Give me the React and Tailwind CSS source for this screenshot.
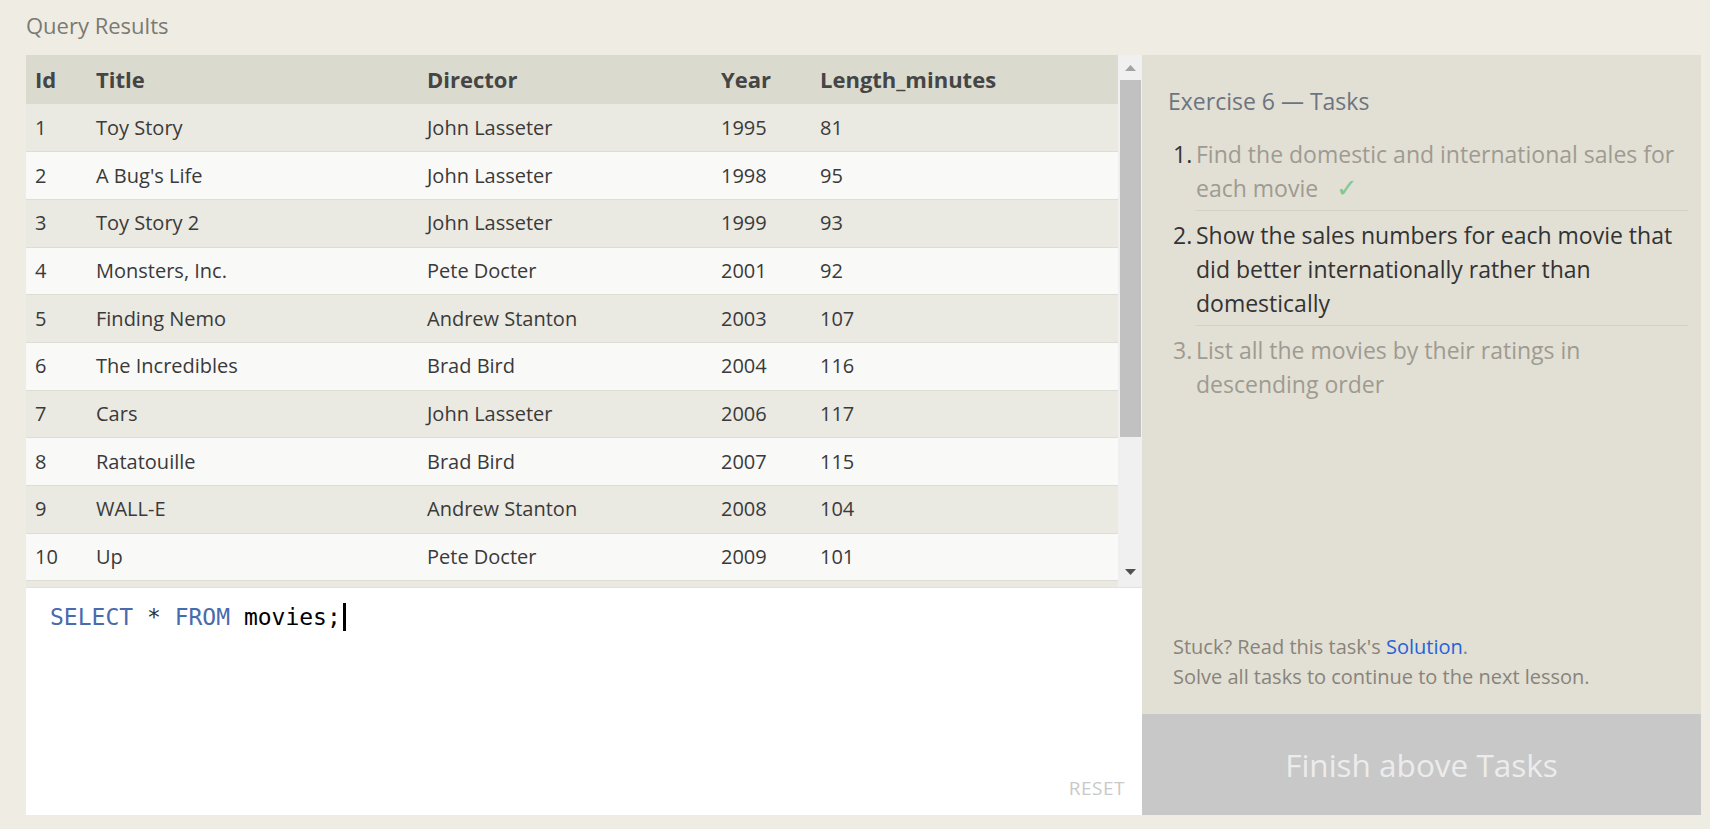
import React from 'react'

const movies = [
  [1, 'Toy Story', 'John Lasseter', 1995, 81],
  [2, "A Bug's Life", 'John Lasseter', 1998, 95],
  [3, 'Toy Story 2', 'John Lasseter', 1999, 93],
  [4, 'Monsters, Inc.', 'Pete Docter', 2001, 92],
  [5, 'Finding Nemo', 'Andrew Stanton', 2003, 107],
  [6, 'The Incredibles', 'Brad Bird', 2004, 116],
  [7, 'Cars', 'John Lasseter', 2006, 117],
  [8, 'Ratatouille', 'Brad Bird', 2007, 115],
  [9, 'WALL-E', 'Andrew Stanton', 2008, 104],
  [10, 'Up', 'Pete Docter', 2009, 101]
]

const tasks = [
  { text: 'Find the domestic and international sales for each movie', done: true },
  { text: 'Show the sales numbers for each movie that did better internationally rather than domestically', active: true },
  { text: 'List all the movies by their ratings in descending order' }
]

const ResultsTable = () => {
  return (
    <div className="flex h-[532px] overflow-hidden">
      {/* the row under "Up" is scrolled out of view, only its background shows */}
      <div className="w-[1092px] overflow-hidden bg-[#eae9e2]">
        <table className="w-full table-fixed border-collapse text-left">
          <colgroup>
            <col className="w-[61px]" />
            <col className="w-[331px]" />
            <col className="w-[294px]" />
            <col className="w-[99px]" />
            <col />
          </colgroup>
          <thead>
            <tr className="h-[49px] bg-[#dadace] text-[22px] font-bold text-[#454545]">
              <th className="pl-[9px] font-bold">Id</th>
              <th className="pl-[9px] font-bold">Title</th>
              <th className="pl-[9px] font-bold">Director</th>
              <th className="pl-[9px] font-bold">Year</th>
              <th className="pl-[9px] font-bold">Length_minutes</th>
            </tr>
          </thead>
          <tbody>
            {movies.map((m, i) => (
              <tr
                key={m[0]}
                className={`h-[47.7px] border-b border-[#dddcd5] text-[20px] text-[#3a3a3a] ${
                  i % 2 === 0 ? 'bg-[#eae9e2]' : 'bg-[#f9f9f8]'
                }`}
              >
                {m.map((cell, j) => (
                  <td key={j} className="pl-[9px]">
                    {cell}
                  </td>
                ))}
              </tr>
            ))}
          </tbody>
        </table>
      </div>

      {/* fake scrollbar */}
      <div className="flex w-[24px] flex-col items-center bg-[#f0f0f0]">
        <div className="flex h-[25px] items-center justify-center">
          <svg width="11" height="6" viewBox="0 0 11 6">
            <path d="M5.5 0 L11 6 L0 6 Z" fill="#a3a3a3" />
          </svg>
        </div>
        <div className="h-[357px] w-[21px] bg-[#c1c1c1]" />
        <div className="flex-1" />
        <div className="flex h-[25px] items-center justify-center pb-[6px]">
          <svg width="11" height="6" viewBox="0 0 11 6">
            <path d="M0 0 L11 0 L5.5 6 Z" fill="#505050" />
          </svg>
        </div>
      </div>
    </div>
  )
}

const Editor = () => {
  return (
    <div className="flex flex-1 flex-col border-t border-[#e2e1da] bg-white">
      <div className="flex-1 pl-[24px] pt-[15px]">
        <div className="flex h-[28px] items-center">
          <p className="whitespace-pre font-['DejaVu_Sans_Mono',monospace] text-[23px] leading-[28px] text-black">
            <span className="text-[#4a6aae]">SELECT</span>
            <span className="text-[#333]"> * </span>
            <span className="text-[#4a6aae]">FROM</span> movies;
          </p>
          <span className="ml-[2px] inline-block h-[28px] w-[3px] bg-black" />
        </div>
      </div>
      <div className="flex justify-end pb-[13px] pr-[17px]">
        <span className="text-[19px] tracking-[0.5px] text-[#c9c9c9]">RESET</span>
      </div>
    </div>
  )
}

const TasksPanel = () => {
  return (
    <div className="flex flex-1 flex-col bg-[#e2dfd4]">
      <div className="flex-1 pl-[26px] pr-[13px] pt-[31px]">
        <h3 className="text-[23px] leading-[30px] text-[#6c7480]">Exercise 6 — Tasks</h3>
        <ol className="mt-[14px]">
          {tasks.map((t, i) => (
            <li
              key={i}
              className={`flex text-[23px] leading-[34px] ${
                t.active ? 'text-[#333]' : 'text-[#9e9b92]'
              }`}
            >
              <span className={`w-[28px] shrink-0 pl-[5px] pt-[7px] ${i === 0 ? 'text-[#333]' : ''}`}>
                {i + 1}.
              </span>
              <div
                className={`flex-1 pb-[5px] pr-[12px] pt-[7px] ${
                  i < tasks.length - 1 ? 'border-b border-[#d3d0c5]' : ''
                }`}
              >
                {t.text}
                {t.done && (
                  <span className="ml-[18px] inline-block text-[26px] leading-[20px] text-[#7fc98c]">✓</span>
                )}
              </div>
            </li>
          ))}
        </ol>
      </div>

      <div className="pb-[22px] pl-[31px] text-[20px] leading-[30px] text-[#88847b]">
        <p>
          Stuck? Read this task's <span className="text-[#2563d8]">Solution</span>.
        </p>
        <p>Solve all tasks to continue to the next lesson.</p>
      </div>

      <div className="flex h-[101px] items-center justify-center bg-[#c8c8c8]">
        <span className="text-[31.5px] text-[#ececec]">Finish above Tasks</span>
      </div>
    </div>
  )
}

export default function App() {
  return (
    <div className="min-h-screen bg-[#efece4] pl-[26px] pr-[9px] pt-[10px] font-['Open_Sans',sans-serif]">
      <h2 className="text-[22px] leading-[30px] text-[#7a7a72]">Query Results</h2>

      <div className="mt-[15px] flex h-[760px]">
        {/* Left part: results + editor */}
        <div className="flex w-[1116px] flex-col">
          <ResultsTable />
          <Editor />
        </div>

        {/* Right part: tasks */}
        <TasksPanel />
      </div>
    </div>
  )
}
